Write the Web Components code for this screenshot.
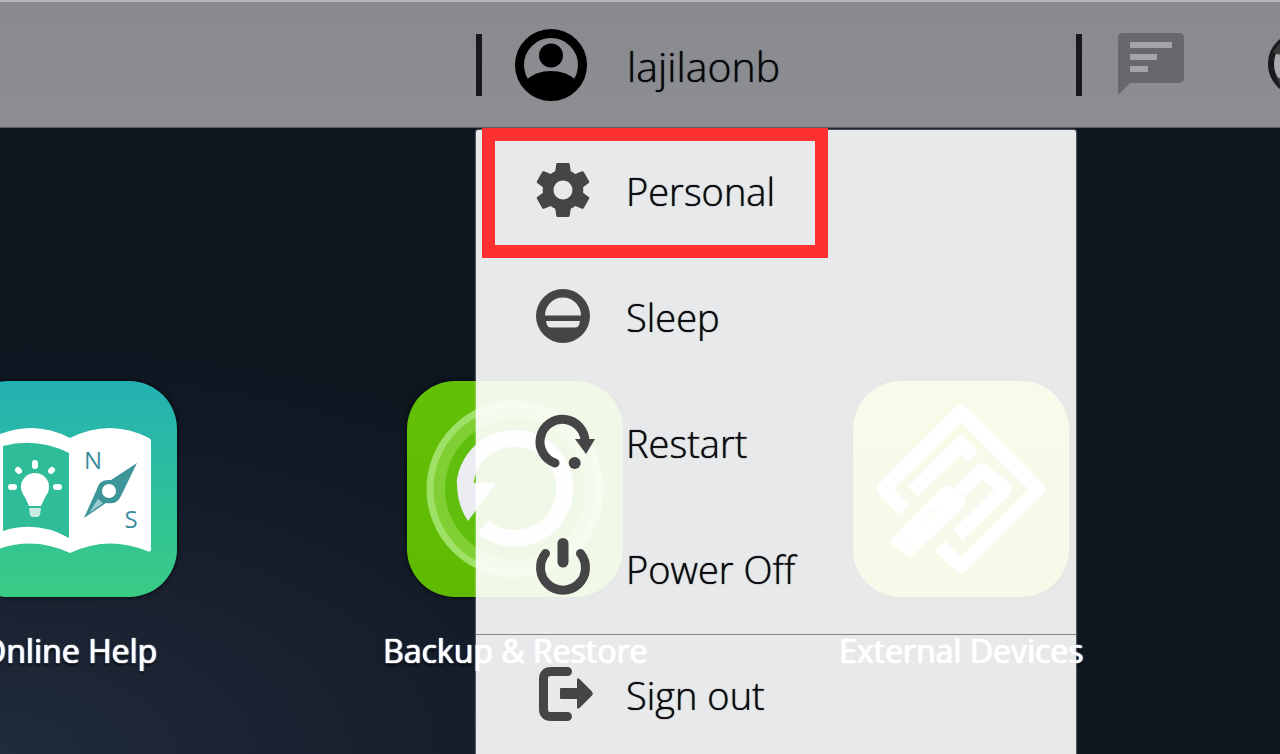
<!DOCTYPE html>
<html lang="en">
<head>
<meta charset="utf-8">
<title>Desktop</title>
<style>
    html, body {
        height: 100%;
        margin: 0;
    }
    body {
        overflow: hidden;
        font-family: "Open Sans", "Noto Sans", sans-serif;
        background: #0e1620;
    }
    svg {
        display: block;
    }
</style>
</head>
<body>

<nas-desktop>
    <nas-taskbar slot="bar">
        <user-menu name="lajilaonb">
            <menu-item label="Personal" marked>
                <svg viewBox="2 2 20 20" fill="#454547" aria-hidden="true"><path d="M19.43 12.98c.04-.32.07-.64.07-.98s-.03-.66-.07-.98l2.11-1.65c.19-.15.24-.42.12-.64l-2-3.46c-.12-.22-.39-.3-.61-.22l-2.49 1c-.52-.4-1.08-.73-1.69-.98l-.38-2.65C14.46 2.18 14.25 2 14 2h-4c-.25 0-.46.18-.49.42l-.38 2.65c-.61.25-1.17.59-1.69.98l-2.49-1c-.23-.09-.49 0-.61.22l-2 3.46c-.13.22-.07.49.12.64l2.11 1.65c-.04.32-.07.65-.07.98s.03.66.07.98l-2.11 1.65c-.19.15-.24.42-.12.64l2 3.46c.12.22.39.3.61.22l2.49-1c.52.4 1.08.73 1.69.98l.38 2.65c.03.24.24.42.49.42h4c.25 0 .46-.18.49-.42l.38-2.65c.61-.25 1.17-.59 1.69-.98l2.49 1c.23.09.49 0 .61-.22l2-3.46c.12-.22.07-.49-.12-.64l-2.11-1.65zM12 15.500c-1.930 0-3.500-1.570-3.500-3.500s1.570-3.500 3.500-3.500 3.500 1.570 3.500 3.500-1.570 3.500-3.500 3.500z"/></svg>
            </menu-item>
            <menu-item label="Sleep">
                <svg viewBox="0 0 54 54" fill="#454547" aria-hidden="true"><path fill-rule="evenodd" d="M27 0a27 27 0 1 1 0 54a27 27 0 0 1 0-54zM9 26.500H45A18 18 0 0 0 9 26.500zM10 32H44L43 36Q42 38.500 39 38.500H15Q12 38.500 11 36z"/></svg>
            </menu-item>
            <menu-item label="Restart">
                <svg viewBox="0 0 54 54" aria-hidden="true"><path d="M19 48A22.500 22.500 0 1 1 49 27" fill="none" stroke="#454547" stroke-width="9" stroke-linecap="round"/><path d="M39 24H59L50 39z" fill="#454547"/><circle cx="38.700" cy="48" r="6" fill="#454547"/></svg>
            </menu-item>
            <menu-item label="Power Off">
                <svg viewBox="0 0 54 54" fill="none" stroke="#454547" stroke-linecap="round" aria-hidden="true"><path d="M9.500 12.500A22.500 22.500 0 1 0 44.500 12.500" stroke-width="9"/><path d="M27 2.500V21" stroke-width="11"/></svg>
            </menu-item>
            <menu-item label="Sign out" divided>
                <svg viewBox="0 0 54 54" aria-hidden="true"><path d="M31.500 4.500H15Q7.500 4.500 7.500 12V42Q7.500 49.500 15 49.500H31.500" fill="none" stroke="#454547" stroke-width="9" stroke-linecap="round"/><path d="M25 21H41V13Q41 10 43.500 12L56 24.500Q57.500 26.500 56 28.500L43.500 41Q41 43 41 40V32H25Q24 32 24 31V22Q24 21 25 21z" fill="#454547"/></svg>
            </menu-item>
        </user-menu>
    </nas-taskbar>

    <app-tile label="Online Help" from="#23b1b3" to="#39cc84">
        <svg viewBox="0 0 216 216" aria-hidden="true">
            <path d="M109 57Q149 37 188 57Q190 58 190 60V168Q190 172 186 170Q147 154 109 172Q71 154 32 170Q28 172 28 168V60Q28 58 30 57Q71 37 109 57z" fill="#fff"/>
            <path d="M42 65Q76 56 108 72V157Q76 139 42 150z" fill="#2fbc98"/>
            <circle cx="74" cy="106" r="14" fill="#fff"/>
            <path d="M62 112L68 125H80L86 112z" fill="#fff"/>
            <path d="M68 127H80L79 134Q78 136 76 136H72Q70 136 69 134z" fill="#c9ece0"/>
            <g stroke="#fff" stroke-width="6" stroke-linecap="round"><path d="M74 82V85M57 89L58 90M91 89L90 90M50 106H53M95 106H98"/></g>
            <path d="M176 82L160 115Q156 124 145 122L123 137L136 108Q138 98 150 99z" fill="#3d9499"/>
            <path d="M128 132L137 118L142 122z" fill="#9dcdd0"/>
            <circle cx="148" cy="110" r="7" fill="#fff"/>
            <g fill="#3a8c9c" font-family="Open Sans, sans-serif" font-size="24" text-anchor="middle"><text x="132" y="88">N</text><text x="170" y="147">S</text></g>
        </svg>
    </app-tile>

    <app-tile label="Backup &amp; Restore" from="#62c006" to="#5fba02">
        <svg viewBox="0 0 216 216" aria-hidden="true">
            <circle cx="108" cy="108" r="85" fill="#80cf34" stroke="#9fe166" stroke-width="7"/>
            <circle cx="108" cy="108" r="70" fill="#5fbf0c"/>
            <path d="M76 146A50 50 0 1 0 58 103" fill="none" stroke="#ececf3" stroke-width="17"/>
            <path d="M50 102H89L61 140Q50 124 50 102z" fill="#ececf3"/>
        </svg>
    </app-tile>

    <app-tile label="External Devices" from="#a4cf25" to="#a0c81c">
        <svg viewBox="0 0 216 216" aria-hidden="true">
            <g fill="none" stroke="#fff" stroke-width="14" stroke-linejoin="round">
                <path d="M51 129L31 108L108 31L185 108L108 185L87 165"/>
                <path d="M60 111L108 63L120 75" stroke-linejoin="miter"/>
                <path d="M103 115L129 89L152 108L105 154"/>
            </g>
            <path d="M88 107Q92 103 97 105L110 113Q113 116 112 121Q111 126 108 129L64 170L44 152z" fill="#fff" stroke="#cfe08a" stroke-width="2"/>
            <path d="M45 152L64 169L57 176L37 161z" fill="#fff" stroke="#dce9b0" stroke-width="2"/>
            <path d="M48 156L52 160M55 163L59 167M69 141L88 124M75 130L80 139M82 136L77 128" fill="none" stroke="#cfe08a" stroke-width="2"/>
        </svg>
    </app-tile>
</nas-desktop>

<script>
    // Whole screen: bar on top, app tiles underneath
    customElements.define("nas-desktop",
        class NasDesktop extends HTMLElement {
            constructor() {
                super();
                this.attachShadow({ mode: "open" }).innerHTML = `
                    <style>
                        :host {
                            display: flex;
                            flex-direction: column;
                            height: 100%;
                            overflow: hidden;
                            background: radial-gradient(ellipse 800px 420px at 0 100%, #1f2c3b 0, #1b2231 35%, #121a26 75%, #0e1620 100%);
                        }
                        main {
                            display: grid;
                            grid-template-columns: repeat(3, 446px);
                            justify-content: end;
                            padding: 253px 96px 0 0;
                        }
                    </style>
                    <slot name="bar"></slot>
                    <main><slot></slot></main>
                `;
            }
        });

    customElements.define("nas-taskbar",
        class NasTaskbar extends HTMLElement {
            constructor() {
                super();
                this.attachShadow({ mode: "open" }).innerHTML = `
                    <style>
                        :host {
                            display: block;
                            position: relative;
                            z-index: 1;
                        }
                        header {
                            display: flex;
                            align-items: center;
                            justify-content: flex-end;
                            height: 125px;
                            border-top: 2px solid #b3b4b8;
                            border-bottom: 1px solid #5b5d62;
                            background: linear-gradient(#898a8f, #8d8e92);
                        }
                        button {
                            flex: none;
                            border: 0;
                            padding: 0 0 2px;
                            background: none;
                        }
                        svg {
                            display: block;
                        }
                        .messages {
                            margin: 0 84px 0 36px;
                        }
                        /* the last button runs off the edge of the screen */
                        .language {
                            margin-right: -52px;
                        }
                    </style>
                    <header>
                        <slot></slot>
                        <button class="messages" type="button" aria-label="Messages">
                            <svg width="66" height="62" viewBox="0 0 66 62"><path d="M5 0H61Q66 0 66 5V45Q66 50 61 50H12L0 62V5Q0 0 5 0z" fill="#66686e"/><path d="M12 9H54V15H12zM12 21H39V27H12zM12 33H30V39H12z" fill="#a3a4a8"/></svg>
                        </button>
                        <button class="language" type="button" aria-label="Language">
                            <svg width="64" height="64" viewBox="0 0 64 64"><circle cx="32" cy="32" r="29" fill="#aaa8b0" stroke="#1b1b1f" stroke-width="6"/><path d="M5 20Q12 26 20 18L30 5H16zM8 44Q16 48 24 60L12 54z" fill="#3a3b36"/></svg>
                        </button>
                    </header>
                `;
            }
        });

    customElements.define("user-menu",
        class UserMenu extends HTMLElement {
            constructor() {
                super();
                this.attachShadow({ mode: "open" }).innerHTML = `
                    <style>
                        :host {
                            display: block;
                            position: relative;
                            flex: none;
                            width: 606px;
                            height: 100%;
                        }
                        .user {
                            display: flex;
                            align-items: center;
                            box-sizing: border-box;
                            width: 100%;
                            height: 100%;
                            border: 0;
                            padding: 0;
                            background: none;
                            font: inherit;
                            font-size: 41px;
                            font-weight: 300;
                            color: #08080c;
                            text-align: left;
                            text-shadow: 0 0 1px #08080c;
                        }
                        .line {
                            width: 6px;
                            height: 62px;
                            background: #17171c;
                        }
                        .user svg {
                            margin: 0 36px 0 33px;
                        }
                        .name {
                            flex: 1;
                            padding: 2px 0 0 4px;
                        }
                        .menu {
                            position: absolute;
                            top: 100%;
                            left: 0;
                            right: 6px;
                            margin-top: 3px;
                            border-radius: 2px;
                            background: rgba(255, 255, 255, .905);
                            box-shadow: 0 0 2px #fff;
                        }
                    </style>
                    <button class="user" type="button" aria-haspopup="menu" aria-expanded="true">
                        <span class="line"></span>
                        <svg width="72" height="72" viewBox="0 0 72 72"><circle cx="36" cy="36" r="31.500" fill="none" stroke="#000" stroke-width="9"/><circle cx="36" cy="26.500" r="12" fill="#000"/><path d="M11 51Q21 42 36 42T61 51L57 59L36 68L15 59z"/></svg>
                        <span class="name"></span>
                        <span class="line"></span>
                    </button>
                    <div class="menu" role="menu"><slot></slot></div>
                `;
            }

            connectedCallback() {
                this.shadowRoot.querySelector(".name").textContent = this.getAttribute("name");
            }
        });

    customElements.define("menu-item",
        class MenuItem extends HTMLElement {
            constructor() {
                super();
                this.attachShadow({ mode: "open" }).innerHTML = `
                    <style>
                        :host {
                            display: block;
                            position: relative;
                        }
                        :host([divided]) {
                            box-shadow: inset 0 1px #85868a;
                        }
                        /* red frame drawn over the item */
                        :host([marked])::after {
                            content: "";
                            position: absolute;
                            top: -2px;
                            left: 6px;
                            box-sizing: border-box;
                            width: 346px;
                            height: 130px;
                            border: 13px solid #fe3132;
                            pointer-events: none;
                        }
                        button {
                            display: flex;
                            align-items: center;
                            gap: 36px;
                            box-sizing: border-box;
                            width: 100%;
                            height: 126px;
                            border: 0;
                            padding: 0 0 6px 60px;
                            background: none;
                            font: inherit;
                            font-size: 38px;
                            font-weight: 300;
                            color: #0b0b10;
                            text-align: left;
                            text-shadow: 0 0 1px #0b0b10;
                        }
                        .label {
                            padding-top: 2px;
                        }
                        ::slotted(svg) {
                            flex: none;
                            width: 54px;
                            height: 54px;
                            overflow: visible;
                        }
                    </style>
                    <button type="button" role="menuitem"><slot></slot><span class="label"></span></button>
                `;
            }

            connectedCallback() {
                this.shadowRoot.querySelector(".label").textContent = this.getAttribute("label");
            }
        });

    customElements.define("app-tile",
        class AppTile extends HTMLElement {
            constructor() {
                super();
                this.attachShadow({ mode: "open" }).innerHTML = `
                    <style>
                        :host {
                            display: block;
                        }
                        a {
                            display: flex;
                            flex-direction: column;
                            align-items: center;
                            gap: 32px;
                            color: #fff;
                            text-decoration: none;
                        }
                        .icon {
                            width: 216px;
                            height: 216px;
                            border-radius: 48px;
                            background: linear-gradient(var(--from), var(--to));
                            box-shadow: 0 0 5px rgba(0, 0, 0, .8);
                        }
                        .label {
                            font-size: 32px;
                            line-height: 44px;
                            white-space: nowrap;
                            text-shadow: 0 0 1px #fff, 1px 0 1px #fff, 0 2px 3px #000;
                        }
                    </style>
                    <a href="#"><span class="icon"><slot></slot></span><span class="label"></span></a>
                `;
            }

            connectedCallback() {
                this.style.setProperty("--from", this.getAttribute("from"));
                this.style.setProperty("--to", this.getAttribute("to"));
                this.shadowRoot.querySelector(".label").textContent = this.getAttribute("label");
            }
        });
</script>
</body>
</html>
